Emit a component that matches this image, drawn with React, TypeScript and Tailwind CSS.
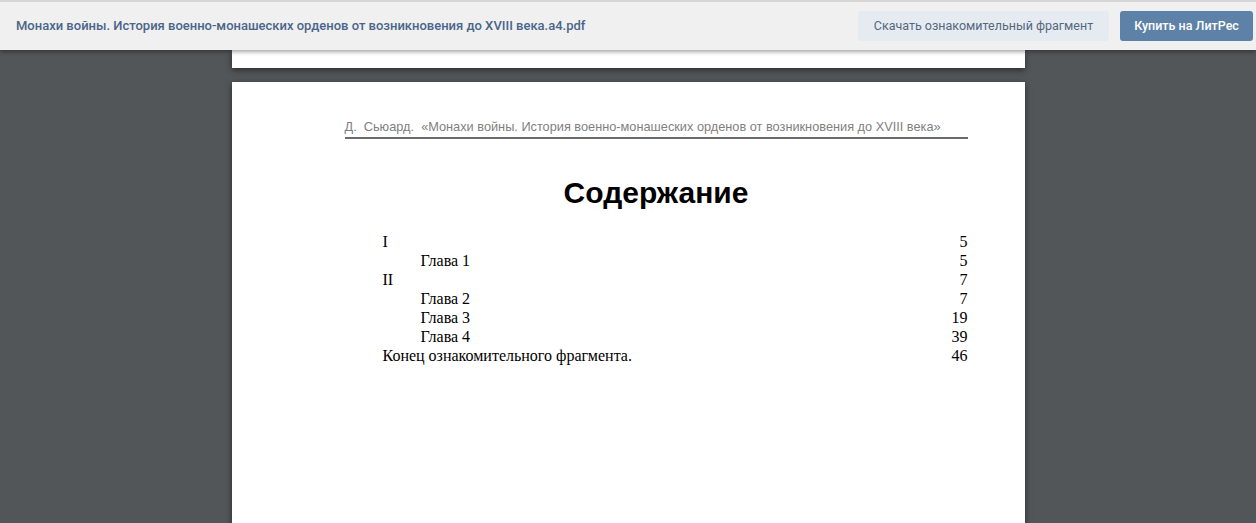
const toc = [
  { title: 'I', page: '5', indent: false },
  { title: 'Глава 1', page: '5', indent: true },
  { title: 'II', page: '7', indent: false },
  { title: 'Глава 2', page: '7', indent: true },
  { title: 'Глава 3', page: '19', indent: true },
  { title: 'Глава 4', page: '39', indent: true },
  { title: 'Конец ознакомительного фрагмента.', page: '46', indent: false },
]

const TopBar = () => {
  return (
    <div className="relative z-10 flex h-[50px] shrink-0 items-center justify-between border-t-2 border-[#d6d6d6] bg-[#f0f0f0] pl-4 pr-[3px] shadow-[0_2px_4px_rgba(0,0,0,0.35)] font-['Roboto',sans-serif]">
      <div className="text-[13px] font-medium text-[#4a658a]">
        Монахи войны. История военно-монашеских орденов от возникновения до XVIII века.a4.pdf
      </div>
      <div className="flex items-center gap-[11px]">
        <button className="h-[30px] w-[251px] rounded-[3px] bg-[#e5ebf1] text-[12.5px] text-[#55677d]">
          Скачать ознакомительный фрагмент
        </button>
        <button className="h-[30px] w-[133px] rounded-[3px] bg-[#5e81a8] text-[12.5px] font-medium text-white">
          Купить на ЛитРес
        </button>
      </div>
    </div>
  )
}

export default function App() {
  return (
    <div className="flex h-[523px] w-full flex-col overflow-hidden bg-[#525659]">
      <TopBar />
      <div className="mx-auto flex w-[793px] flex-col gap-[14px]">
        <div className="h-[18px] bg-white shadow-[0_2px_6px_rgba(0,0,0,0.5)]" />
        <div className="h-[460px] bg-white pl-[113px] pr-[57px] pt-[37px] shadow-[0_2px_6px_rgba(0,0,0,0.5)]">
          <div className="border-b-2 border-[#6b6b6b] pb-[3px] font-['Liberation_Sans',Arial,sans-serif] text-[12.75px] leading-[15px] text-[#7f7f7f]">
            Д.&nbsp; Сьюард.&nbsp; «Монахи войны. История военно-монашеских орденов от возникновения до XVIII века»
          </div>
          <h1 className="mt-[36px] text-center font-['Liberation_Sans',Arial,sans-serif] text-[30px] font-bold leading-[36px] text-black">
            Содержание
          </h1>
          <div className="mt-[21px] pl-[38px] font-['Liberation_Serif','Times_New_Roman',serif] text-[16px] leading-[19px] text-black">
            {toc.map((row) => (
              <div key={row.title} className="flex justify-between">
                <span className={row.indent ? 'pl-[38px]' : ''}>{row.title}</span>
                <span>{row.page}</span>
              </div>
            ))}
          </div>
        </div>
      </div>
    </div>
  )
}
